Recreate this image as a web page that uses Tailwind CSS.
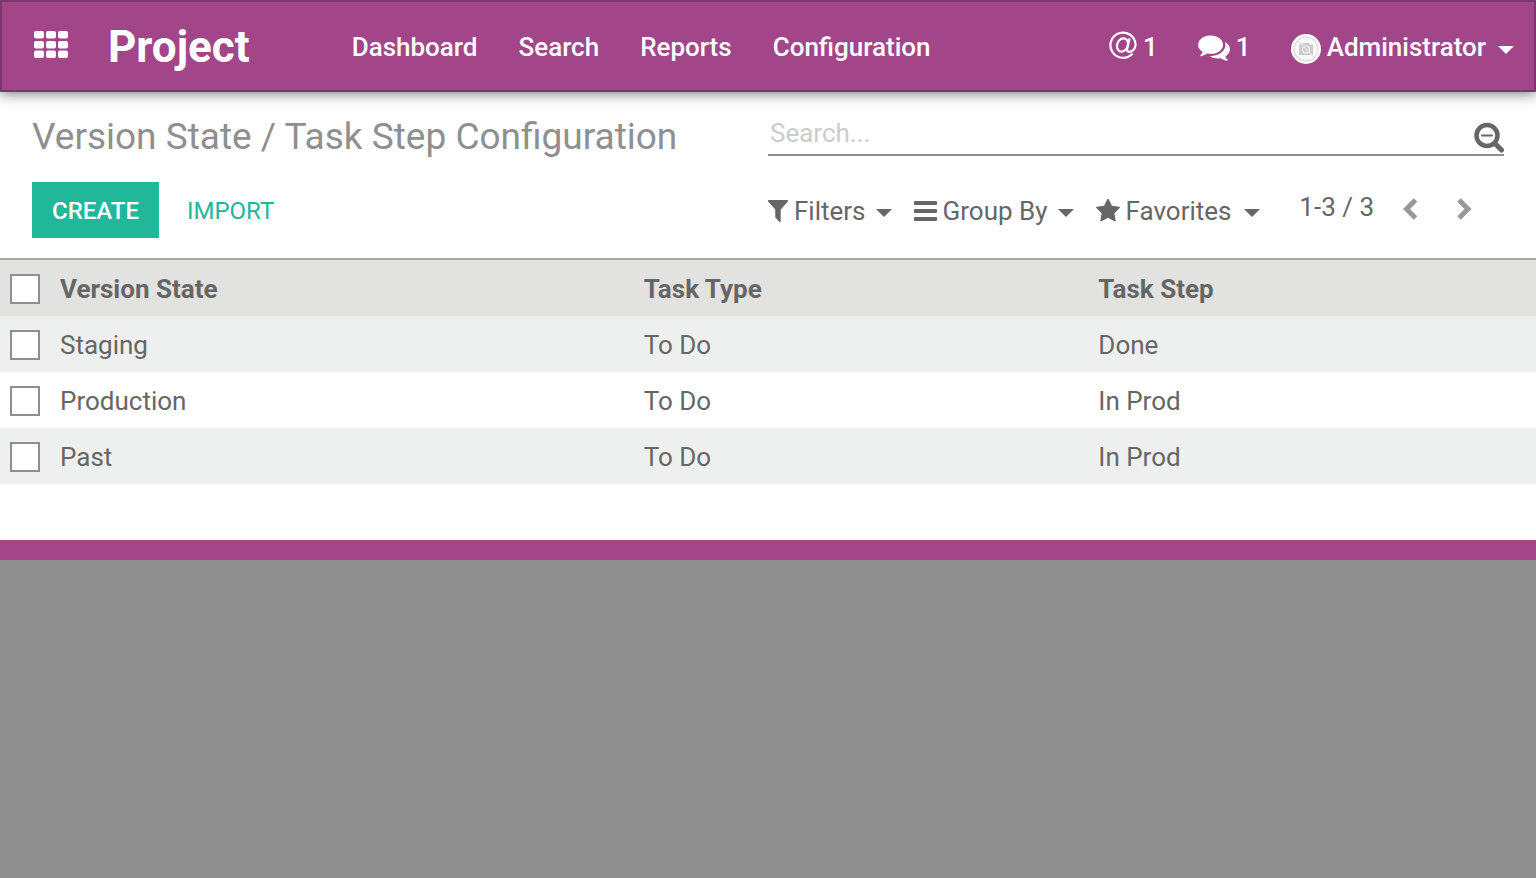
<!DOCTYPE html>
<html lang="en">
<head>
<meta charset="utf-8">
<meta name="viewport" content="width=device-width, initial-scale=1">
<title>Project - Task Step Configuration</title>
<script src="https://cdn.jsdelivr.net/npm/@tailwindcss/browser@4"></script>
</head>
<body class="min-h-screen bg-[#8f8f8f] font-[Roboto,sans-serif] text-[26px] leading-9 text-[#666666]">
<header class="relative flex h-[92px] items-center border-2 border-[#7c386b] bg-[#a24689] pt-0.5 pr-5 pl-8 font-medium text-white shadow-[0_2px_12px_rgba(0,0,0,0.5)]">
  <button type="button" aria-label="Apps" class="mr-[38px]">
    <svg class="mb-1 h-7 w-9" viewBox="0 0 36 28" fill="currentColor" aria-hidden="true">
      <rect x="0" y="0" width="10" height="7.500" rx="2"/><rect x="12" y="0" width="10" height="7.500" rx="2"/><rect x="24" y="0" width="10" height="7.500" rx="2"/>
      <rect x="0" y="10" width="10" height="7.500" rx="2"/><rect x="12" y="10" width="10" height="7.500" rx="2"/><rect x="24" y="10" width="10" height="7.500" rx="2"/>
      <rect x="0" y="19.500" width="10" height="7.500" rx="2"/><rect x="12" y="19.500" width="10" height="7.500" rx="2"/><rect x="24" y="19.500" width="10" height="7.500" rx="2"/>
    </svg>
  </button>
  <a href="#" class="text-[44px] leading-[52px] font-bold">Project</a>
  <nav class="ml-[102px] flex gap-[41px]">
    <a href="#">Dashboard</a>
    <a href="#">Search</a>
    <a href="#">Reports</a>
    <a href="#">Configuration</a>
  </nav>
  <div class="ml-auto flex items-center gap-10">
    <button type="button" aria-label="Mentions" class="flex items-center gap-1.5">
      <svg class="mb-1 size-7" viewBox="0 0 28 28" fill="none" stroke="currentColor" stroke-width="2.200" aria-hidden="true">
        <path d="M23.500 22.500A12.600 12.600 0 1 1 26.600 13.500c0 4.500-3.300 7.300-6.300 7.300-2.200 0-2.500-1.600-2-3.700l2.200-9.600"/>
        <ellipse cx="13.500" cy="14" rx="5.300" ry="6.800" transform="rotate(24 13.500 14)"/>
      </svg>1
    </button>
    <button type="button" aria-label="Conversations" class="flex items-center gap-1.5">
      <svg class="size-8" viewBox="0 0 1792 1792" fill="currentColor" aria-hidden="true"><path d="M1408 768q0 139-94 257t-256.500 186.500-353.500 68.500q-86 0-176-16-124 88-278 128-36 9-86 16h-3q-11 0-20.500-8t-11.500-21q-1-3-1-6.500t.5-6.500 2-6l2.500-5 3.500-5.500 4-5 4.500-5 4-4.500q5-6 23-25t26-29.500 22.500-29 25-38.500 20.500-44q-124-72-195-177t-71-224q0-139 94-257t256.500-186.500 353.500-68.500 353.500 68.500 256.500 186.500 94 257zm384 256q0 120-71 224.500t-195 176.500q10 24 20.500 44t25 38.500 22.500 29 26 29.500 23 25q1 1 4 4.500t4.500 5 4 5 3.500 5.500l2.500 5 2 6 .5 6.500-1 6.500q-3 14-13 22t-22 7q-50-7-86-16-154-40-278-128-90 16-176 16-271 0-472-132 58 4 88 4 161 0 309-45t264-129q125-92 192-212t67-254q0-77-23-152 129 71 204 178t75 230z"/></svg>1
    </button>
    <button type="button" class="flex items-center gap-1.5">
      <svg class="mt-1 size-[30px]" viewBox="0 0 30 30" aria-hidden="true">
        <circle cx="15" cy="15" r="15" fill="#fff"/><circle cx="15" cy="15" r="12" fill="#f8f8f8" stroke="#e0e0e0" stroke-width="1.500"/>
        <path d="M8 10.500h3l1-1.500h6l1 1.500h3V21H8z" fill="#cbcbcb"/><circle cx="15" cy="15.500" r="3.500" fill="#cbcbcb" stroke="#f4f4f4" stroke-width="1.200"/><path d="m7 7 16 16" stroke="#e2e2e2" stroke-width="1.500"/>
      </svg>
      Administrator
      <svg class="mt-1.5 ml-1.5 h-2 w-4" viewBox="0 0 16 8" fill="currentColor" aria-hidden="true"><path d="M0 0h16L8 8z"/></svg>
    </button>
  </div>
</header>

<main class="border-b-[20px] border-[#a24689] bg-white pb-14">
  <section class="grid grid-cols-2 border-b-2 border-[#a8a8a8] pt-5 pb-5">
    <div class="pl-8">
      <h1 class="text-[37px] leading-[50px] text-[#8f8f8f]"><a href="#">Version State</a> / Task Step Configuration</h1>
      <div class="mt-5 flex text-2xl">
        <button type="button" class="h-14 bg-[#21b799] px-5 pt-0.5 font-medium text-white">CREATE</button>
        <button type="button" class="ml-2 h-14 px-5 pt-0.5 text-[#21b799]">IMPORT</button>
      </div>
    </div>
    <div class="pr-8">
      <div class="flex h-11 items-end border-b-2 border-[#8f8f8f]">
        <input type="search" aria-label="Search" placeholder="Search..." class="mb-[3px] min-w-0 flex-1 px-0.5 outline-none placeholder:text-[#cccccc]">
        <button type="button" aria-label="Advanced search">
          <svg class="size-8" viewBox="0 0 32 32" fill="none" stroke="#666" stroke-width="4.500" aria-hidden="true"><circle cx="15" cy="13.500" r="10.500"/><path d="m23 21.500 6.500 6.500" stroke-width="5" stroke-linecap="round"/><path d="M10 13.500h10" stroke-width="2" stroke-linecap="round"/></svg>
        </button>
      </div>
      <div class="mt-[33px] flex items-center">
        <div class="flex gap-[22px]">
          <button type="button" class="flex items-center gap-1.5">
            <svg class="h-[22px] w-5" viewBox="192 256 1408 1408" preserveAspectRatio="none" fill="currentColor" aria-hidden="true"><path d="M1595 295q17 41-14 70l-493 493v742q0 42-39 57-13 5-25 5-27 0-45-19l-256-256q-19-19-19-45v-486l-493-493q-31-29-14-70 17-39 59-39h1280q42 0 59 39z"/></svg>
            Filters
            <svg class="mt-1 ml-1 h-2 w-4" viewBox="0 0 16 8" fill="currentColor" aria-hidden="true"><path d="M0 0h16L8 8z"/></svg>
          </button>
          <button type="button" class="flex items-center gap-1.5">
            <svg class="h-5 w-[23px]" viewBox="0 0 23 20" fill="currentColor" aria-hidden="true"><rect y="0" x="0" width="23" height="4" rx="1"/><rect y="8" x="0" width="23" height="4" rx="1"/><rect y="16" x="0" width="23" height="4" rx="1"/></svg>
            Group By
            <svg class="mt-1 ml-1 h-2 w-4" viewBox="0 0 16 8" fill="currentColor" aria-hidden="true"><path d="M0 0h16L8 8z"/></svg>
          </button>
          <button type="button" class="flex items-center gap-1.5">
            <svg class="size-6" viewBox="64 64 1664 1664" fill="currentColor" aria-hidden="true"><path d="M1728 647q0 22-26 48l-363 354 86 500q1 7 1 20 0 21-10.500 35.500t-30.500 14.500q-19 0-40-12l-449-236-449 236q-22 12-40 12-21 0-31.500-14.500t-10.500-35.500q0-6 2-20l86-500-364-354q-25-27-25-48 0-37 56-46l502-73 225-455q19-41 49-41t49 41l225 455 502 73q56 9 56 46z"/></svg>
            Favorites
            <svg class="mt-1 ml-1.5 h-2 w-4" viewBox="0 0 16 8" fill="currentColor" aria-hidden="true"><path d="M0 0h16L8 8z"/></svg>
          </button>
        </div>
        <div class="mb-2 ml-auto flex items-center pr-8">
          <span class="mr-7">1-3 / 3</span>
          <button type="button" aria-label="Previous" class="mr-[38px]"><svg class="mt-1 h-[22px] w-4" viewBox="0 0 16 22" fill="none" stroke="#999" stroke-width="5" aria-hidden="true"><path d="M13.500 2 4.500 11l9 9"/></svg></button>
          <button type="button" aria-label="Next"><svg class="mt-1 h-[22px] w-4" viewBox="0 0 16 22" fill="none" stroke="#999" stroke-width="5" aria-hidden="true"><path d="m3 2 9 9-9 9"/></svg></button>
        </div>
      </div>
    </div>
  </section>

  <table class="w-full table-fixed text-left">
    <thead class="bg-[#e2e2e0]">
      <tr class="h-14">
        <th class="w-[50px] pt-0.5 pl-2.5"><input type="checkbox" aria-label="Select all" class="block size-[30px] appearance-none border-2 border-[#8f8f8f] bg-white"></th>
        <th class="w-[38%] pt-0.5 pl-2.5 font-bold">Version State</th>
        <th class="w-[29.6%] pt-0.5 pl-2.5 font-bold">Task Type</th>
        <th class="pt-0.5 pl-2.5 font-bold">Task Step</th>
      </tr>
    </thead>
    <tbody>
      <tr class="h-14 odd:bg-[#eef0ef]">
        <td class="pt-0.5 pl-2.5"><input type="checkbox" aria-label="Select Staging" class="block size-[30px] appearance-none border-2 border-[#8f8f8f] bg-white"></td>
        <td class="pt-0.5 pl-2.5">Staging</td><td class="pt-0.5 pl-2.5">To Do</td><td class="pt-0.5 pl-2.5">Done</td>
      </tr>
      <tr class="h-14 odd:bg-[#eef0ef]">
        <td class="pt-0.5 pl-2.5"><input type="checkbox" aria-label="Select Production" class="block size-[30px] appearance-none border-2 border-[#8f8f8f] bg-white"></td>
        <td class="pt-0.5 pl-2.5">Production</td><td class="pt-0.5 pl-2.5">To Do</td><td class="pt-0.5 pl-2.5">In Prod</td>
      </tr>
      <tr class="h-14 odd:bg-[#eef0ef]">
        <td class="pt-0.5 pl-2.5"><input type="checkbox" aria-label="Select Past" class="block size-[30px] appearance-none border-2 border-[#8f8f8f] bg-white"></td>
        <td class="pt-0.5 pl-2.5">Past</td><td class="pt-0.5 pl-2.5">To Do</td><td class="pt-0.5 pl-2.5">In Prod</td>
      </tr>
    </tbody>
  </table>
</main>
</body>
</html>
